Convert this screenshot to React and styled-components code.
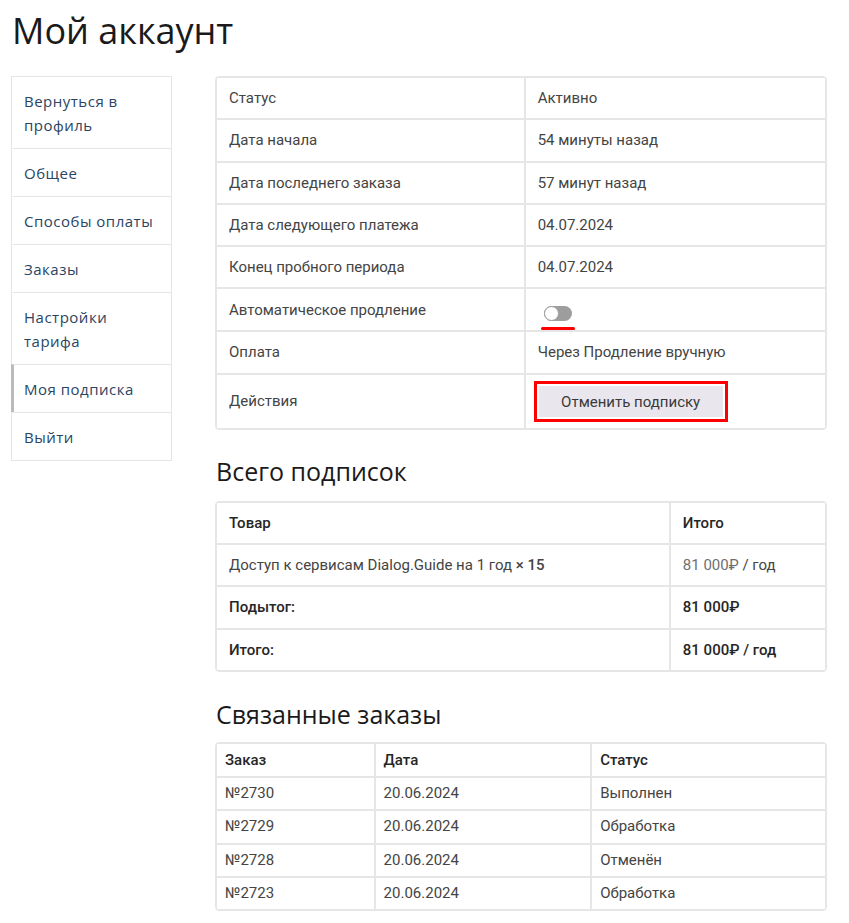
import styled, { createGlobalStyle } from "styled-components";

const Global = createGlobalStyle`
  body {
    margin: 0;
    background: #fff;
    font-family: "Open Sans", "Noto Sans", sans-serif;
    color: #333;
  }
`;

const Page = styled.div`
  padding: 4px 22px 12px 11px;
`;

const Title = styled.h1`
  font-family: "Open Sans", sans-serif;
  font-weight: 400;
  font-size: 36px;
  line-height: 54px;
  margin: 0 0 18px 1px;
  color: #1a1a1a;
`;

const Layout = styled.div`
  display: flex;
  align-items: flex-start;
  gap: 43px;
`;

const Nav = styled.ul`
  list-style: none;
  margin: 0;
  padding: 0;
  width: 159px;
  border: 1px solid #e5e5e5;
  flex-shrink: 0;
`;

const NavItem = styled.li`
  padding: 11.5px 10px;
  line-height: 24px;
  font-size: 15px;
  letter-spacing: 0.5px;
  color: #2a4563;
  border-top: 1px solid #e5e5e5;
  border-left: 3px solid ${(p) => (p.$active ? "#bbb" : "transparent")};
  margin-left: -1px;
  &:first-child {
    border-top: none;
  }
`;

const Main = styled.div`
  flex: 1;
  font-family: Roboto, "Liberation Sans", sans-serif;
`;

const Table = styled.table`
  width: 100%;
  border-collapse: separate;
  border-spacing: 0;
  border: 1px solid #e6e6e6;
  border-radius: 4px;
  font-size: 15px;
  color: #444;
`;

const Td = styled.td`
  border: 1px solid #e6e6e6;
  padding: ${(p) => p.$pad || "10px 12px"};
  line-height: ${(p) => p.$lh || "20.3px"};
  vertical-align: ${(p) => (p.$top ? "top" : "middle")};
  width: ${(p) => p.$w || "auto"};
  font-weight: ${(p) => (p.$bold ? 500 : 400)};
  color: ${(p) => (p.$bold ? "#262626" : "inherit")};
`;

const Heading = styled.h2`
  font-family: "Open Sans", sans-serif;
  font-weight: 400;
  font-size: 25px;
  line-height: 32px;
  color: #1a1a1a;
  margin: ${(p) => p.$m || "25px 0 14px 1px"};
`;

const ToggleWrap = styled.div`
  display: inline-flex;
  flex-direction: column;
  align-items: center;
  gap: 6px;
  margin-left: 3px;
`;

const Track = styled.span`
  display: block;
  width: 28px;
  height: 15px;
  border-radius: 8px;
  background: #9d9d9d;
  position: relative;
`;

const Knob = styled.span`
  position: absolute;
  left: 0;
  top: 0;
  width: 15px;
  height: 15px;
  border-radius: 50%;
  background: #fff;
  box-sizing: border-box;
  border: 1px solid #9d9d9d;
`;

const Underline = styled.span`
  display: block;
  width: 34px;
  height: 3px;
  border-radius: 2px;
  background: #f00;
`;

const Highlight = styled.div`
  display: inline-block;
  border: 3px solid #f00;
  padding: 2px;
`;

const Button = styled.button`
  font-family: Roboto, "Liberation Sans", sans-serif;
  font-size: 15px;
  font-weight: 400;
  color: #3a3a3a;
  background: #e9e6ed;
  border: none;
  padding: 7px 14px 6px;
  width: 184px;
  line-height: 18px;
`;

const Price = styled.span`
  color: ${(p) => (p.$muted ? "#6f6f6f" : "inherit")};
`;

const details = [
  ["Статус", "Активно"],
  ["Дата начала", "54 минуты назад"],
  ["Дата последнего заказа", "57 минут назад"],
  ["Дата следующего платежа", "04.07.2024"],
  ["Конец пробного периода", "04.07.2024"],
];

const orders = [
  ["№2730", "20.06.2024", "Выполнен"],
  ["№2729", "20.06.2024", "Обработка"],
  ["№2728", "20.06.2024", "Отменён"],
  ["№2723", "20.06.2024", "Обработка"],
];

const navItems = [
  "Вернуться в профиль",
  "Общее",
  "Способы оплаты",
  "Заказы",
  "Настройки тарифа",
  "Моя подписка",
  "Выйти",
];

export default function App() {
  return (
    <Page>
      <Global />
      <Title>Мой аккаунт</Title>
      <Layout>
        <Nav>
          {navItems.map((item) => (
            <NavItem key={item} $active={item === "Моя подписка"}>
              {item}
            </NavItem>
          ))}
        </Nav>
        <Main>
          <Table>
            <tbody>
              {details.map(([k, v]) => (
                <tr key={k}>
                  <Td $w="50.6%">{k}</Td>
                  <Td>{v}</Td>
                </tr>
              ))}
              <tr>
                <Td>Автоматическое продление</Td>
                <Td $top $pad="17px 12px 0">
                  <ToggleWrap>
                    <Track>
                      <Knob />
                    </Track>
                    <Underline />
                  </ToggleWrap>
                </Td>
              </tr>
              <tr>
                <Td>Оплата</Td>
                <Td>Через Продление вручную</Td>
              </tr>
              <tr>
                <Td>Действия</Td>
                <Td $pad="6px 8px">
                  <Highlight>
                    <Button>Отменить подписку</Button>
                  </Highlight>
                </Td>
              </tr>
            </tbody>
          </Table>

          <Heading>Всего подписок</Heading>
          <Table>
            <tbody>
              <tr>
                <Td $bold>Товар</Td>
                <Td $bold $w="25.6%">Итого</Td>
              </tr>
              <tr>
                <Td>
                  Доступ к сервисам Dialog.Guide на 1 год <b style={{ fontWeight: 500 }}>× 15</b>
                </Td>
                <Td>
                  <Price $muted>81 000₽</Price> / год
                </Td>
              </tr>
              <tr>
                <Td $bold>Подытог:</Td>
                <Td $bold>81 000₽</Td>
              </tr>
              <tr>
                <Td $bold>Итого:</Td>
                <Td $bold>81 000₽ / год</Td>
              </tr>
            </tbody>
          </Table>

          <Heading $m="26px 0 12px 1px">Связанные заказы</Heading>
          <Table>
            <tbody>
              <tr>
                <Td $bold $pad="6px 8px" $lh="20px" $w="26%">Заказ</Td>
                <Td $bold $pad="6px 8px" $lh="20px" $w="35.5%">Дата</Td>
                <Td $bold $pad="6px 8px" $lh="20px">Статус</Td>
              </tr>
              {orders.map(([n, d, s]) => (
                <tr key={n}>
                  <Td $pad="5px 8px" $lh="21.3px">{n}</Td>
                  <Td $pad="5px 8px" $lh="21.3px">{d}</Td>
                  <Td $pad="5px 8px" $lh="21.3px">{s}</Td>
                </tr>
              ))}
            </tbody>
          </Table>
        </Main>
      </Layout>
    </Page>
  );
}
